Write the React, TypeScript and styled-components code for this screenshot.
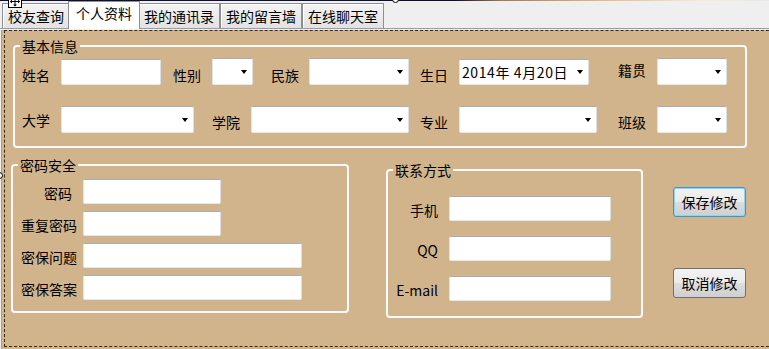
import React from 'react'
import styled, { createGlobalStyle, css } from 'styled-components'

const FONT = `"Noto Sans CJK SC", "Noto Sans", sans-serif`

const GlobalStyle = createGlobalStyle`
  html, body {
    margin: 0;
    padding: 0;
    background: #f0f0f0;
    overflow: hidden;
  }
  body {
    font-family: ${FONT};
    font-size: 14px;
    color: #000;
  }
`

const TABS = ['校友查询', '个人资料', '我的通讯录', '我的留言墙', '在线聊天室']

function App() {
  return (
    <Frame>
      <GlobalStyle />
      <TopEdge />
      <TabStrip>
        {TABS.map((t, i) => (
          <Tab key={t} $active={i === 1}>
            {t}
          </Tab>
        ))}
      </TabStrip>
      <TabBody>
        <Panel>
          <GroupBox $w={734} $mt={7} $ml={8}>
            <Legend>基本信息</Legend>
            <Rows>
              <FieldRow>
                <Label $w={39}>姓名</Label>
                <TextBox $w={100} />
                <Label $w={39} $ml={12}>性别</Label>
                <Combo w={41} />
                <Label $w={38} $ml={18}>民族</Label>
                <Combo w={100} />
                <Label $w={39} $ml={11}>生日</Label>
                <DateBox>
                  2014年 4月20日
                  <Arrow />
                </DateBox>
                <Label $w={39} $ml={29} $lift={7}>籍贯</Label>
                <Combo w={70} />
              </FieldRow>
              <FieldRow>
                <Label $w={39} $lift={5}>大学</Label>
                <Combo w={133} />
                <Label $w={39} $ml={18} $lift={3}>学院</Label>
                <Combo w={158} />
                <Label $w={39} $ml={11} $lift={3}>专业</Label>
                <Combo w={138} />
                <Label $w={39} $ml={21} $lift={3}>班级</Label>
                <Combo w={70} />
              </FieldRow>
            </Rows>
          </GroupBox>

          <BottomRow>
            <GroupBox $w={338}>
              <Legend>密码安全</Legend>
              <FormGrid $col={70} $pt={6} $pb={11} $gap={7}>
                <FormLabel $pr={11}>密码</FormLabel>
                <TextBox $w={138} $h={25} />
                <FormLabel>重复密码</FormLabel>
                <TextBox $w={138} $h={25} />
                <FormLabel>密保问题</FormLabel>
                <TextBox $w={219} $h={25} />
                <FormLabel>密保答案</FormLabel>
                <TextBox $w={219} $h={25} />
              </FormGrid>
            </GroupBox>

            <GroupBox $w={257} $mt={5} $ml={37}>
              <Legend>联系方式</Legend>
              <FormGrid $col={61} $pt={18} $pb={15} $gap={15}>
                <FormLabel $pr={11}>手机</FormLabel>
                <TextBox $w={162} $h={25} />
                <FormLabel $pr={11}>QQ</FormLabel>
                <TextBox $w={162} $h={25} />
                <FormLabel $pr={11}>E-mail</FormLabel>
                <TextBox $w={162} $h={25} />
              </FormGrid>
            </GroupBox>

            <Buttons>
              <Button $focused>保存修改</Button>
              <Button>取消修改</Button>
            </Buttons>
          </BottomRow>
        </Panel>
      </TabBody>

      <MoveHandle>
        <svg width="14" height="13" viewBox="0 0 14 13">
          <rect x="0.5" y="0.5" width="13" height="12" fill="#fff" stroke="#000" />
          <path d="M7 2v9M2.5 6.5h9" stroke="#000" strokeWidth="1" />
          <path d="M7 1.5l-2 2h4zM7 11.5l-2-2h4zM2 6.5l2-2v4zM12 6.5l-2-2v4z" fill="#000" />
        </svg>
      </MoveHandle>
      <Grip $x={392} $y={-4} />
      <Grip $x={-4} $y={172} />
    </Frame>
  )
}

function Combo({ w }: { w: number }) {
  return (
    <ComboBox $w={w}>
      <Arrow />
    </ComboBox>
  )
}

const Frame = styled.div`
  position: relative;
  width: 769px;
  height: 349px;
  overflow: hidden;
  background: #f0f0f0;
  font-family: ${FONT};
  font-size: 14px;
`

const TopEdge = styled.div`
  height: 1px;
  background: linear-gradient(
    to right,
    #0e0e30 0,
    #0e0e30 455px,
    #a07850 500px,
    #e2b880 600px,
    #f6ecd4 700px,
    #e8e8e8 769px
  );
`

const TabStrip = styled.div`
  display: flex;
  align-items: flex-end;
  height: 28px;
  box-sizing: border-box;
  padding-left: 2px;
  border-bottom: 1px solid #8e9bb0;
  background: #efefef;
`

const Tab = styled.div<{ $active?: boolean }>`
  position: relative;
  box-sizing: border-box;
  height: 25px;
  padding: 4px 5px 0;
  line-height: 16px;
  white-space: nowrap;
  border: 1px solid #8c8f96;
  border-bottom: none;
  background: linear-gradient(#f4f4f4, #e2e2e2);
  box-shadow: inset 1px 1px 0 #fff;

  ${(p) =>
    p.$active &&
    css`
      z-index: 1;
      height: 28px;
      margin: 0 -2px -1px;
      padding: 3px 7px 0;
      background: #fff;
      box-shadow: none;
    `}
`

const TabBody = styled.div`
  height: 320px;
  margin-left: 1px;
  border-left: 1px solid #a0a0a0;
  background: #d2b48c;
`

const Panel = styled.div`
  box-sizing: border-box;
  width: 800px;
  height: 317px;
  margin: 1px 0 0 2px;
  border: 1px dashed #3a2912;
`

const GroupBox = styled.fieldset<{ $w: number; $mt?: number; $ml?: number }>`
  box-sizing: border-box;
  width: ${(p) => p.$w}px;
  min-width: 0;
  margin: ${(p) => p.$mt ?? 0}px 0 0 ${(p) => p.$ml ?? 0}px;
  padding: 0;
  border: 2px solid #fbfbfb;
  border-radius: 4px;
  flex: none;
`

const Legend = styled.legend`
  margin-left: 5px;
  padding: 0 2px;
  line-height: 16px;
  font-size: 14px;
`

const Rows = styled.div`
  display: flex;
  flex-direction: column;
  gap: 21px;
  padding: 4px 0 13px 7px;
`

const FieldRow = styled.div`
  display: flex;
  align-items: flex-end;
  height: 27px;
`

const Label = styled.span<{ $w: number; $ml?: number; $lift?: number }>`
  flex: none;
  align-self: flex-end;
  width: ${(p) => p.$w}px;
  margin-left: ${(p) => p.$ml ?? 0}px;
  margin-bottom: ${(p) => p.$lift ?? 2}px;
  line-height: 16px;
  white-space: nowrap;
`

const fieldBorder = css`
  box-sizing: border-box;
  border: 1px solid;
  border-color: #abadb3 #dbdfe6 #e3e9ef #e2e3ea;
  border-radius: 2px;
  background: #fff;
`

const TextBox = styled.div<{ $w: number; $h?: number }>`
  ${fieldBorder};
  flex: none;
  width: ${(p) => p.$w}px;
  height: ${(p) => p.$h ?? 26}px;
`

const ComboBox = styled.div<{ $w: number }>`
  ${fieldBorder};
  position: relative;
  flex: none;
  width: ${(p) => p.$w}px;
  height: 27px;
`

const DateBox = styled.div`
  ${fieldBorder};
  position: relative;
  flex: none;
  width: 130px;
  height: 26px;
  padding-left: 2px;
  line-height: 24px;
  letter-spacing: 0.6px;
  white-space: pre;
`

const Arrow = styled.span`
  position: absolute;
  right: 5px;
  top: 50%;
  margin-top: -2px;
  width: 0;
  height: 0;
  border-left: 3px solid transparent;
  border-right: 3px solid transparent;
  border-top: 4px solid #000;
`

const BottomRow = styled.div`
  display: flex;
  align-items: flex-start;
  margin-top: 9px;
  padding-left: 6px;
`

const FormGrid = styled.div<{ $col: number; $pt: number; $pb: number; $gap: number }>`
  display: grid;
  grid-template-columns: ${(p) => p.$col}px auto;
  align-items: center;
  row-gap: ${(p) => p.$gap}px;
  padding: ${(p) => p.$pt}px 0 ${(p) => p.$pb}px;
`

const FormLabel = styled.span<{ $pr?: number }>`
  padding-right: ${(p) => p.$pr ?? 6}px;
  text-align: right;
  line-height: 16px;
  white-space: nowrap;
  transform: translateY(1px);
`

const Buttons = styled.div`
  display: flex;
  flex-direction: column;
  gap: 51px;
  margin: 30px 0 0 30px;
`

const Button = styled.button<{ $focused?: boolean }>`
  width: 73px;
  height: 30px;
  padding: 0;
  font-family: ${FONT};
  font-size: 14px;
  color: #000;
  border: 1px solid #707070;
  border-radius: 3px;
  background: linear-gradient(#f2f2f2 0%, #ebebeb 48%, #dddddd 52%, #cfcfcf 100%);

  ${(p) =>
    p.$focused &&
    css`
      border-color: #2f9ad9;
      box-shadow: inset 0 0 0 1px #8fd3f7;
    `}
`

const MoveHandle = styled.div`
  position: absolute;
  left: 8px;
  top: -5px;
  line-height: 0;
`

const Grip = styled.span<{ $x: number; $y: number }>`
  position: absolute;
  left: ${(p) => p.$x}px;
  top: ${(p) => p.$y}px;
  width: 7px;
  height: 7px;
  box-sizing: border-box;
  border: 1px solid #000;
  border-radius: 50%;
  background: #fff;
`

export default App
